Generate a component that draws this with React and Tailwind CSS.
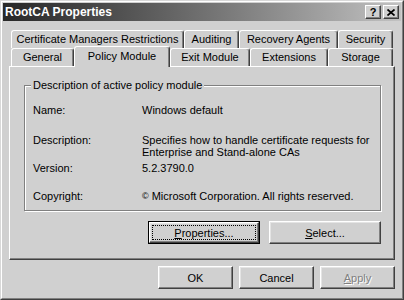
import React from "react";

const face = "bg-[#d0d0d0]";

const Tab = ({ label, width, selected }) => (
  <div
    className={`${face} ${width} ${
      selected ? "h-[21px] -mb-px relative z-10 pb-[3px]" : "h-[18px] pb-px"
    } flex items-center justify-center border-l border-t border-white border-r border-r-[#404040] rounded-t-[3px] shadow-[inset_-1px_0_0_#808080]`}
  >
    {label}
  </div>
);

const Button = ({ children, width = "w-[75px]", isDefault, disabled }) => {
  const bevel =
    "border-l border-t border-white border-r border-b border-r-[#404040] border-b-[#404040] shadow-[inset_-1px_-1px_0_#808080,inset_1px_1px_0_#e4e4e4]";
  if (isDefault) {
    return (
      <div className={`${width} h-[23px] border border-black`}>
        <div className={`h-full w-full ${bevel} p-[2px]`}>
          <div className="h-full w-full border border-dotted border-black flex items-center justify-center">
            {children}
          </div>
        </div>
      </div>
    );
  }
  return (
    <div
      className={`${width} h-[23px] ${bevel} flex items-center justify-center ${
        disabled ? "text-[#808080] [text-shadow:1px_1px_0_#fff]" : ""
      }`}
    >
      {children}
    </div>
  );
};

export default function App() {
  return (
    <div
      className={`w-[404px] h-[300px] ${face} border border-l-[#d8d8d8] border-t-[#d8d8d8] border-r-[#404040] border-b-[#404040] text-[11px] leading-[12px] text-black font-['Liberation_Sans',Arial,sans-serif]`}
    >
      <div className="h-full w-full border border-l-white border-t-white border-r-[#808080] border-b-[#808080] p-px flex flex-col">
        {/* Title bar */}
        <div className="h-[18px] shrink-0 flex items-center bg-linear-to-r from-[#282828] to-[#c2c2c2] pl-[2px] pr-[2px]">
          <span className="text-white font-bold text-[12px] flex-1">RootCA Properties</span>
          <div className="flex gap-[2px]">
            <div className={`${face} w-[16px] h-[14px] flex items-center justify-center border-l border-t border-white border-r border-b border-r-[#404040] border-b-[#404040] shadow-[inset_-1px_-1px_0_#808080] font-bold text-[11px] leading-none pt-px`}>
              ?
            </div>
            <div className={`${face} w-[16px] h-[14px] flex items-center justify-center border-l border-t border-white border-r border-b border-r-[#404040] border-b-[#404040] shadow-[inset_-1px_-1px_0_#808080]`}>
              <svg width="8" height="7" viewBox="0 0 8 7">
                <path d="M0.5 0.5 L7.5 6.5 M7.5 0.5 L0.5 6.5" stroke="#000" strokeWidth="1.7" fill="none" />
              </svg>
            </div>
          </div>
        </div>

        {/* Body */}
        <div className="flex flex-col px-[6px] pt-[9px]">
          {/* Tabs */}
          <div className="pl-[2px] flex flex-col">
            <div className="flex">
              <Tab label="Certificate Managers Restrictions" width="w-[173px]" />
              <Tab label="Auditing" width="w-[55px]" />
              <Tab label="Recovery Agents" width="w-[99px]" />
              <Tab label="Security" width="w-[55px]" />
            </div>
            <div className="flex items-end h-[18px]">
              <Tab label="General" width="w-[63px]" />
              <Tab label="Policy Module" width="w-[96px]" selected />
              <Tab label="Exit Module" width="w-[80px]" />
              <Tab label="Extensions" width="w-[78px]" />
              <Tab label="Storage" width="w-[65px]" />
            </div>
          </div>

          {/* Panel */}
          <div className="w-[386px] h-[194px] border border-l-white border-t-white border-r-[#404040] border-b-[#404040] shadow-[inset_-1px_-1px_0_#808080] flex flex-col">
            <div className="ml-[14px] mt-[18px] w-[357px] h-[126px] border border-[#808080] shadow-[inset_1px_1px_0_#fff,1px_1px_0_#fff] flex flex-col">
              <div className={`${face} -mt-[7px] ml-[6px] px-[2px] w-fit`}>
                Description of active policy module
              </div>
              <div className="grid grid-cols-[109px_1fr] pl-[8px] mt-[13px]">
                <div>Name:</div>
                <div>Windows default</div>
                <div className="mt-[18px]">Description:</div>
                <div className="mt-[18px]">
                  Specifies how to handle certificate requests for
                  <br />
                  Enterprise and Stand-alone CAs
                </div>
                <div className="mt-[4px]">Version:</div>
                <div className="mt-[4px]">5.2.3790.0</div>
                <div className="mt-[16px]">Copyright:</div>
                <div className="mt-[16px]">
                  <span className="text-[9px] align-top">©</span> Microsoft Corporation. All rights reserved.
                </div>
              </div>
            </div>
            <div className="ml-[14px] mt-[10px] w-[357px] flex justify-end gap-[9px]">
              <Button width="w-[112px]" isDefault>
                <span>
                  <span className="underline">P</span>roperties...
                </span>
              </Button>
              <Button width="w-[112px]">
                <span>
                  <span className="underline">S</span>elect...
                </span>
              </Button>
            </div>
          </div>

          {/* Bottom buttons */}
          <div className="mt-[6px] flex justify-end gap-[6px]">
            <Button>OK</Button>
            <Button>Cancel</Button>
            <Button disabled>
              <span>
                <span className="underline">A</span>pply
              </span>
            </Button>
          </div>
        </div>
      </div>
    </div>
  );
}
